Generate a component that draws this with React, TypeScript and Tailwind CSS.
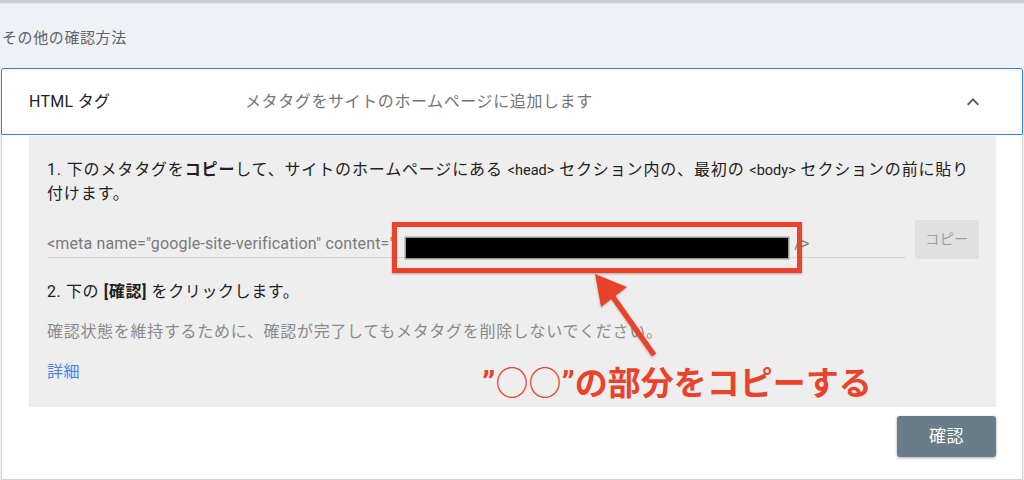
import React from "react";

const font = { fontFamily: "Roboto, 'Noto Sans CJK JP', sans-serif" };

function ChevronUp() {
  return (
    <svg width="24" height="24" viewBox="0 0 24 24" className="block">
      <path d="M12 8l-6 6 1.41 1.41L12 10.83l4.59 4.58L18 14z" fill="#5f6368" />
    </svg>
  );
}

function Arrow() {
  return (
    <svg
      className="absolute left-0 top-0 pointer-events-none"
      width="1024"
      height="480"
      viewBox="0 0 1024 480"
    >
      <defs>
        <filter id="arrowShadow" x="-20%" y="-20%" width="140%" height="140%">
          <feDropShadow dx="0" dy="1" stdDeviation="1" floodColor="#000" floodOpacity="0.25" />
        </filter>
      </defs>
      <g filter="url(#arrowShadow)">
        <line x1="654" y1="355" x2="608" y2="290" stroke="#e9432b" strokeWidth="5.5" />
        <polygon points="595,274 627,287 601,307" fill="#e9432b" />
      </g>
    </svg>
  );
}

export default function App() {
  return (
    <div
      className="relative w-[1024px] h-[480px] overflow-hidden bg-[#eef1f6]"
      style={font}
    >
      {/* top app bar edge */}
      <div className="h-[2px] bg-[#c9ccd1] shadow-[0_1px_2px_rgba(0,0,0,0.2)]" />

      <div className="h-[66px] flex items-center pl-[2px] pt-[6px]">
        <span className="text-[15px] tracking-[0.6px] text-[#5f6368]">その他の確認方法</span>
      </div>

      <div className="ml-[1px] w-[1022px]">
        {/* expansion panel header */}
        <div className="h-[67px] flex items-center border border-[#3b78e0] rounded-t-[3px] bg-white">
          <div className="w-[216px] ml-[27px] text-[16px] tracking-[0.3px] text-[#212121]">HTML タグ</div>
          <div className="flex-1 text-[16px] tracking-[0.6px] text-[#757575]">
            メタタグをサイトのホームページに追加します
          </div>
          <div className="mr-[37px] mt-[1px]">
            <ChevronUp />
          </div>
        </div>

        {/* expansion panel body */}
        <div className="h-[345px] bg-white border-x border-b border-[#d0d3d8] pt-[1px]">
          <div className="ml-[27px] w-[967px] h-[271px] bg-[#eeeeee] relative">
            <div className="absolute left-[18px] right-[17px] top-[22px] text-[16px] leading-[23px] tracking-[0.85px] text-[#212121]">
              1. 下のメタタグを<b className="font-bold">コピー</b>して、サイトのホームページにある{" "}
              <span className="text-[14.5px] tracking-normal">&lt;head&gt;</span> セクション内の、最初の{" "}
              <span className="text-[14.5px] tracking-normal">&lt;body&gt;</span> セクションの前に貼り付けます。
            </div>
          </div>
        </div>
      </div>

      {/* panel content over the grey block */}
      <div className="absolute left-[47px] top-[220px] w-[932px]">
        <div className="flex items-start gap-[9px]">
          <div className="flex-1 h-[38px] border-b border-[#d6d6d6] flex items-center pt-[10px]">
            <span className="text-[16px] tracking-[0.15px] text-[#7a7a7a] whitespace-nowrap">
              &lt;meta name="google-site-verification" content="<span className="inline-block w-[390px]" />"{" "}/&gt;
            </span>
          </div>
          <div className="w-[64px] h-[39px] rounded-[3px] bg-[#e0e0e0] flex items-center justify-center text-[14px] tracking-[0.5px] text-[#9e9e9e]">
            コピー
          </div>
        </div>
        <div className="mt-[21px] text-[16px] tracking-[0.6px] text-[#212121]">
          2. 下の <b className="font-bold">[確認]</b> をクリックします。
        </div>
        <div className="mt-[16px] text-[16px] tracking-[0.7px] text-[#8a8a8a]">
          確認状態を維持するために、確認が完了してもメタタグを削除しないでください。
        </div>
        <div className="mt-[16px] text-[16px] tracking-[0.5px] text-[#4d7ff0]">詳細</div>
      </div>

      {/* verify button */}
      <div className="absolute left-[897px] top-[416px] w-[99px] h-[41px] rounded-[3px] bg-[#687c89] shadow-[0_1px_3px_rgba(0,0,0,0.35)] flex items-center justify-center text-[17px] tracking-[0.5px] text-white">
        確認
      </div>

      {/* callout: highlight box with masked token */}
      <div className="absolute left-[392px] top-[222px] w-[410px] h-[51px] border-[5px] border-[#e9432b] shadow-[0_1px_2px_rgba(0,0,0,0.3)]" />
      <div className="absolute left-[406px] top-[238px] w-[382px] h-[20px] bg-black shadow-[0_0_0_1.5px_#9a9a9a]" />

      <Arrow />

      <div className="absolute left-[482px] top-[360px] text-[33px] leading-[48px] font-bold text-[#e9432b] whitespace-nowrap">
        ”<span className="font-normal">○○</span>”の部分をコピーする
      </div>
    </div>
  );
}
